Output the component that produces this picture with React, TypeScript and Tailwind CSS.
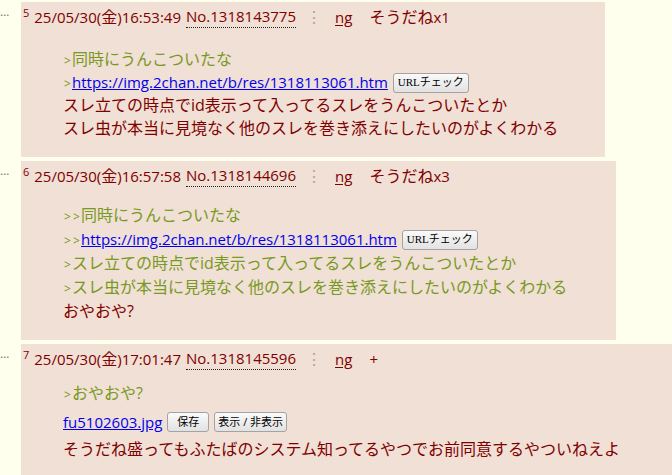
import React from "react";

const FONT = { fontFamily: '"Open Sans", "Noto Sans CJK JP", sans-serif' };

// latin runs are a touch narrower than the CJK text in the original
function L({ children }: { children: React.ReactNode }) {
  return <span className="text-[15px]">{children}</span>;
}

function Gt({ n = 1 }: { n?: number }) {
  return (
    <>
      {Array.from({ length: n }).map((_, i) => (
        <span key={i} className="inline-block w-[9px] text-center text-[12px] leading-[12px]">
          &gt;
        </span>
      ))}
    </>
  );
}

function Btn({ children, serif, px = "px-[4px]" }: { children: React.ReactNode; serif?: boolean; px?: string }) {
  return (
    <button
      className={
        "ml-[5px] h-[20px] text-[11px] leading-none text-black border border-[#a3a3a3] rounded-[3px] bg-linear-to-b from-[#fafafa] to-[#e2e2e2] align-[2px] " +
        px +
        (serif ? " font-['Liberation_Serif','Noto_Sans_CJK_JP',serif]" : "")
      }
    >
      {children}
    </button>
  );
}

function Header({ num, date, time, no, extra }: { num: string; date: string; time: string; no: string; extra: React.ReactNode }) {
  return (
    <div className="flex items-start pl-[2px] leading-[24px]">
      <span className="text-[11px] leading-[11px] mt-[2px] mr-[5px]">{num}</span>
      <span>
        <L>{date}(</L>金<L>){time}</L>
      </span>
      <span className="ml-[5px] leading-[22px] border-b border-dotted border-[#222]">
        <L>{no}</L>
      </span>
      <span className="ml-[10px] text-[#b0a49a]">⋮</span>
      <span className="ml-[13px] underline underline-offset-2">
        <L>ng</L>
      </span>
      <span className="ml-[17px]">{extra}</span>
    </div>
  );
}

function Post({
  width,
  num,
  date,
  time,
  no,
  extra,
  children,
  bq,
}: {
  width: string;
  num: string;
  date: string;
  time: string;
  no: string;
  extra: React.ReactNode;
  children: React.ReactNode;
  bq: string;
}) {
  return (
    <div className="flex">
      <div className="w-[21px] shrink-0 pt-[4px] text-[12px] leading-[12px] text-[#777]">…</div>
      <div className={"bg-[#f0e0d6] pt-[3px] " + width}>
        <Header num={num} date={date} time={time} no={no} extra={extra} />
        <div className={"ml-[42px] " + bq}>{children}</div>
      </div>
    </div>
  );
}

export default function App() {
  return (
    <div
      className="min-h-[475px] bg-[#ffffee] text-[#800000] text-[16px] pt-[2px] flex flex-col gap-[4px] overflow-hidden"
      style={FONT}
    >
      <Post
        width="w-[584px]"
        num="5"
        date="25/05/30"
        time="16:53:49"
        no="No.1318143775"
        extra={
          <>
            そうだね<L>x1</L>
          </>
        }
        bq="mt-[19px] mb-[17px] leading-[23px]"
      >
        <div className="text-[#789922]">
          <Gt />同時にうんこついたな
        </div>
        <div className="text-[#789922]">
          <Gt />
          <a className="text-[#0000ee] underline">
            <L>https://img.2chan.net/b/res/1318113061.htm</L>
          </a>
          <Btn serif>URLチェック</Btn>
        </div>
        <div>スレ立ての時点でid表示って入ってるスレをうんこついたとか</div>
        <div>スレ虫が本当に見境なく他のスレを巻き添えにしたいのがよくわかる</div>
      </Post>

      <Post
        width="w-[595px]"
        num="6"
        date="25/05/30"
        time="16:57:58"
        no="No.1318144696"
        extra={
          <>
            そうだね<L>x3</L>
          </>
        }
        bq="mt-[15px] mb-[17px] leading-[24px]"
      >
        <div className="text-[#789922]">
          <Gt n={2} />同時にうんこついたな
        </div>
        <div className="text-[#789922]">
          <Gt n={2} />
          <a className="text-[#0000ee] underline">
            <L>https://img.2chan.net/b/res/1318113061.htm</L>
          </a>
          <Btn serif>URLチェック</Btn>
        </div>
        <div className="text-[#789922]">
          <Gt />スレ立ての時点でid表示って入ってるスレをうんこついたとか
        </div>
        <div className="text-[#789922]">
          <Gt />スレ虫が本当に見境なく他のスレを巻き添えにしたいのがよくわかる
        </div>
        <div>おやおや?</div>
      </Post>

      <Post
        width="w-[646px] flex-1"
        num="7"
        date="25/05/30"
        time="17:01:47"
        no="No.1318145596"
        extra={<L>+</L>}
        bq="mt-[11px] mb-[20px]"
      >
        <div className="text-[#789922] leading-[23px]">
          <Gt />おやおや?
        </div>
        <div className="leading-[30px] mt-[2px]">
          <a className="text-[#0000ee] underline">
            <L>fu5102603.jpg</L>
          </a>
          <Btn px="px-[9px]">保存</Btn>
          <Btn px="px-[3px]">表示 / 非表示</Btn>
        </div>
        <div className="leading-[24px]">そうだね盛ってもふたばのシステム知ってるやつでお前同意するやついねえよ</div>
      </Post>
    </div>
  );
}
